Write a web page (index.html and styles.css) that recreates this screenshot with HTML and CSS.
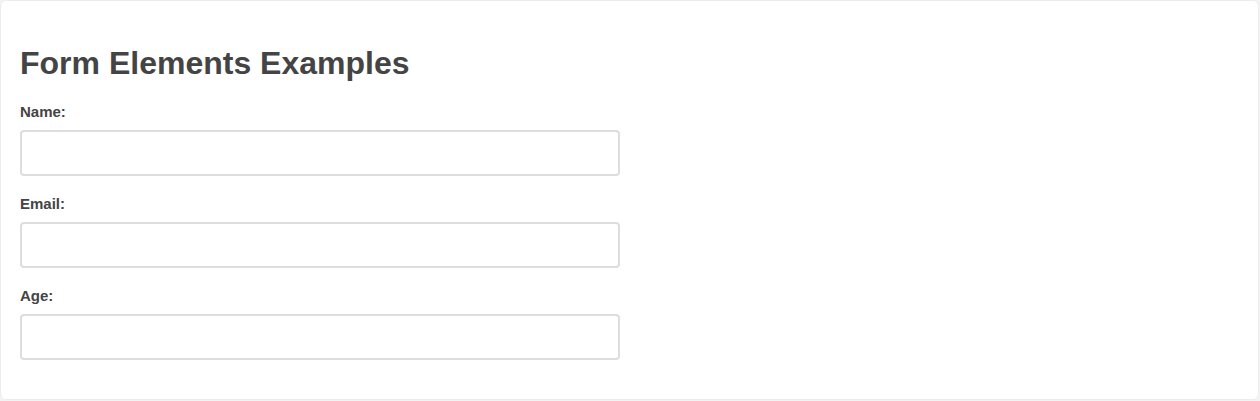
FILE: index.html
```html
<!DOCTYPE html>
<html lang="en">
<head>
<meta charset="utf-8">
<title>Form Elements Examples</title>
<link rel="stylesheet" href="styles.css">
</head>
<body>
  <div class="card">
    <h1 class="title">Form Elements Examples</h1>
    <form class="form">
      <div class="group">
        <label class="label" for="name">Name:</label>
        <input class="field" type="text" id="name">
      </div>
      <div class="group">
        <label class="label" for="email">Email:</label>
        <input class="field" type="email" id="email">
      </div>
      <div class="group">
        <label class="label" for="age">Age:</label>
        <input class="field" type="number" id="age">
      </div>
    </form>
  </div>
</body>
</html>
```

FILE: styles.css
```css
html, body {
  margin: 0;
  padding: 0;
  background: #f3f3f3;
  font-family: "Liberation Sans", Arial, sans-serif;
  color: #444;
}

.card {
  width: 1219px;
  background: #fff;
  border: 1px solid #ececec;
  border-radius: 6px;
  padding: 20px 19px;
}

.title {
  font-size: 32px;
  font-weight: bold;
  line-height: normal;
  margin: 24px 0 21px;
  color: #444;
}

.form {
  margin: 0;
}

.group {
  margin-bottom: 19px;
}

.label {
  display: block;
  font-size: 15px;
  font-weight: bold;
  line-height: 17px;
  margin-bottom: 10px;
  color: #444;
}

.field {
  display: block;
  box-sizing: border-box;
  width: 600px;
  height: 46px;
  margin: 0;
  padding: 10px;
  font-family: "Liberation Sans", Arial, sans-serif;
  font-size: 16px;
  border: 2px solid #ddd;
  border-radius: 4px;
  background: #fff;
  outline: none;
}
```
